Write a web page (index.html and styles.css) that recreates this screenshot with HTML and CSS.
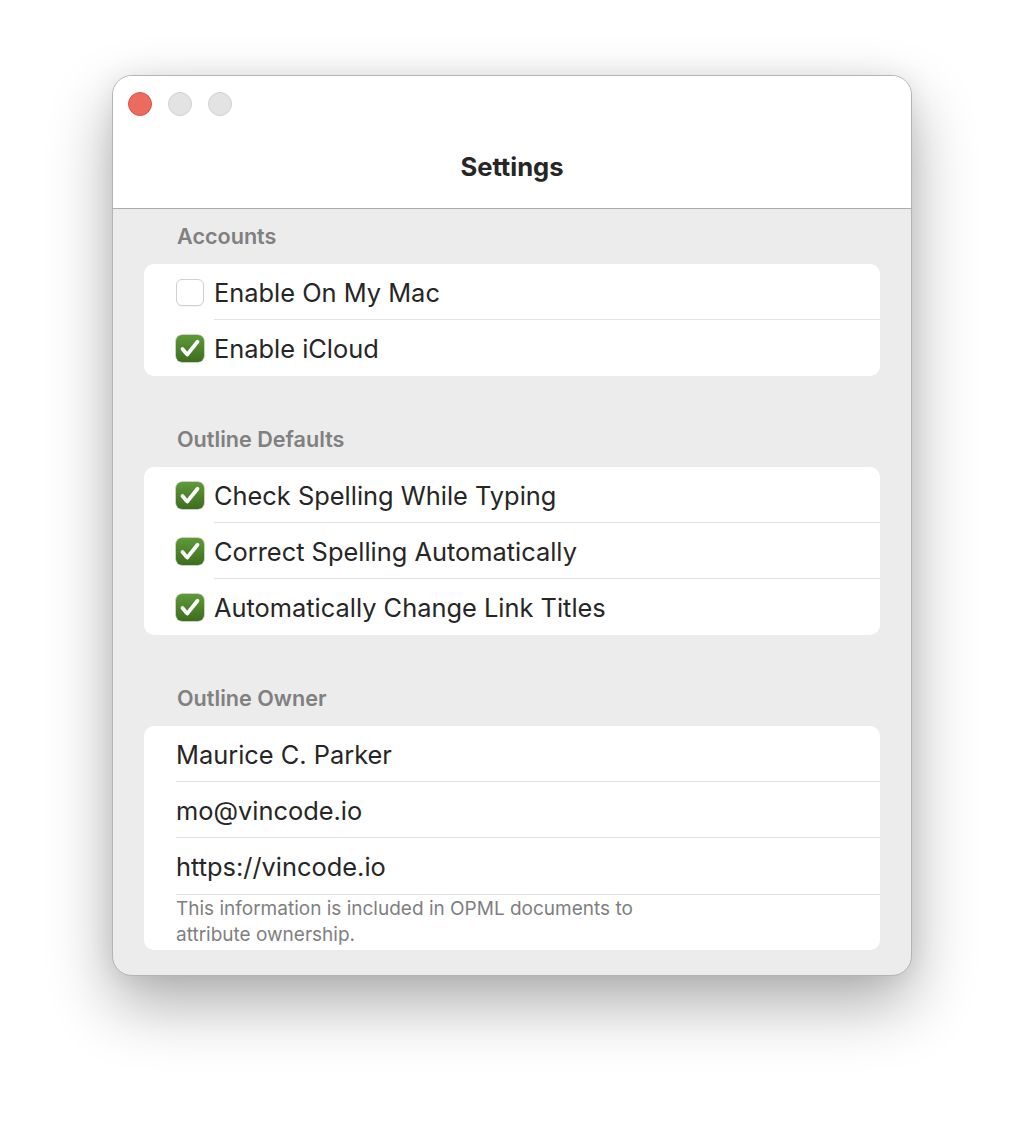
FILE: index.html
```html
<!DOCTYPE html>
<html lang="en">
<head>
<meta charset="utf-8">
<title>Settings</title>
<link rel="stylesheet" href="styles.css">
</head>
<body>
<div class="stage">
  <div class="window">
    <div class="titlebar">
      <div class="lights">
        <span class="light close"></span>
        <span class="light"></span>
        <span class="light"></span>
      </div>
      <div class="title">Settings</div>
    </div>
    <div class="content">
      <div class="section-header">Accounts</div>
      <div class="card">
        <div class="row check-row">
          <span class="checkbox"></span>
          <span class="label">Enable On My Mac</span>
        </div>
        <div class="row check-row">
          <span class="checkbox checked"><svg viewBox="0 0 28 27" width="28" height="27"><path d="M6.5 14 L11.2 19.6 L21.5 6.8" fill="none" stroke="#fff" stroke-width="3.8" stroke-linecap="round" stroke-linejoin="round"/></svg></span>
          <span class="label">Enable iCloud</span>
        </div>
      </div>

      <div class="section-header spaced">Outline Defaults</div>
      <div class="card">
        <div class="row check-row">
          <span class="checkbox checked"><svg viewBox="0 0 28 27" width="28" height="27"><path d="M6.5 14 L11.2 19.6 L21.5 6.8" fill="none" stroke="#fff" stroke-width="3.8" stroke-linecap="round" stroke-linejoin="round"/></svg></span>
          <span class="label">Check Spelling While Typing</span>
        </div>
        <div class="row check-row">
          <span class="checkbox checked"><svg viewBox="0 0 28 27" width="28" height="27"><path d="M6.5 14 L11.2 19.6 L21.5 6.8" fill="none" stroke="#fff" stroke-width="3.8" stroke-linecap="round" stroke-linejoin="round"/></svg></span>
          <span class="label">Correct Spelling Automatically</span>
        </div>
        <div class="row check-row">
          <span class="checkbox checked"><svg viewBox="0 0 28 27" width="28" height="27"><path d="M6.5 14 L11.2 19.6 L21.5 6.8" fill="none" stroke="#fff" stroke-width="3.8" stroke-linecap="round" stroke-linejoin="round"/></svg></span>
          <span class="label">Automatically Change Link Titles</span>
        </div>
      </div>

      <div class="section-header spaced">Outline Owner</div>
      <div class="card">
        <div class="row text-row"><span class="label">Maurice C. Parker</span></div>
        <div class="row text-row"><span class="label">mo@vincode.io</span></div>
        <div class="row text-row sep-bottom"><span class="label">https://vincode.io</span></div>
        <div class="footnote">This information is included in OPML documents to<br>attribute ownership.</div>
      </div>
    </div>
  </div>
</div>
</body>
</html>
```

FILE: styles.css
```css
* { box-sizing: border-box; }
html, body {
  margin: 0;
  padding: 0;
  background: #ffffff;
}
body {
  font-family: "Inter", "Noto Sans", "Liberation Sans", sans-serif;
  color: #262626;
}
.stage {
  padding: 75px 0 0 112px;
  min-height: 1124px;
}
.window {
  width: 800px;
  height: 901px;
  border: 1px solid #b4b4b4;
  border-radius: 20px;
  background: #ececec;
  overflow: hidden;
  box-shadow: 0 28px 64px rgba(0, 0, 0, 0.32), 0 0 24px rgba(0, 0, 0, 0.07);
}
.titlebar {
  height: 133px;
  background: #ffffff;
  border-bottom: 1px solid #ababab;
  padding: 16px 0 0 15px;
}
.lights {
  display: flex;
  gap: 16px;
}
.light {
  width: 24px;
  height: 24px;
  border-radius: 50%;
  background: #e3e3e3;
  border: 1px solid #cfcfcf;
}
.light.close {
  background: #ed6a5e;
  border-color: #d4544a;
}
.title {
  margin: 36px 0 0 -15px;
  text-align: center;
  font-size: 25.6px;
  font-weight: 700;
  line-height: 30px;
  color: #262626;
}
.content {
  padding: 13px 31px 0;
}
.section-header {
  padding-left: 33px;
  font-size: 21.6px;
  font-weight: 600;
  line-height: 28px;
  color: #808080;
  margin-bottom: 14px;
}
.section-header.spaced {
  margin-top: 49px;
}
.card {
  background: #ffffff;
  border-radius: 10px;
  overflow: hidden;
}
.row {
  height: 56px;
  display: flex;
  align-items: center;
  position: relative;
  padding-top: 1px;
}
.check-row {
  padding-left: 32px;
}
.check-row + .check-row::before {
  content: "";
  position: absolute;
  top: -1px;
  left: 70px;
  right: 0;
  height: 1px;
  background: #e2e2e2;
}
.text-row {
  padding-left: 32px;
}
.text-row + .text-row::before,
.sep-bottom::after {
  content: "";
  position: absolute;
  left: 32px;
  right: 0;
  height: 1px;
  background: #e2e2e2;
}
.text-row + .text-row::before { top: -1px; }
.sep-bottom::after { bottom: -1px; }
.checkbox {
  width: 28px;
  height: 27px;
  border-radius: 6px;
  background: #ffffff;
  border: 1px solid #d0d0d0;
  box-shadow: 0 1px 1px rgba(0, 0, 0, 0.05);
  margin-right: 10px;
  flex: none;
  display: flex;
}
.checkbox.checked {
  border: none;
  background: linear-gradient(#5e9a38, #3d6d1e);
  box-shadow: 0 0 0 0.5px rgba(40, 80, 20, 0.5);
}
.label {
  font-size: 25.4px;
  line-height: 30px;
  color: #262626;
}
.footnote {
  padding: 2px 32px 2px;
  font-size: 19px;
  line-height: 26px;
  color: #7f7f7f;
}
```
